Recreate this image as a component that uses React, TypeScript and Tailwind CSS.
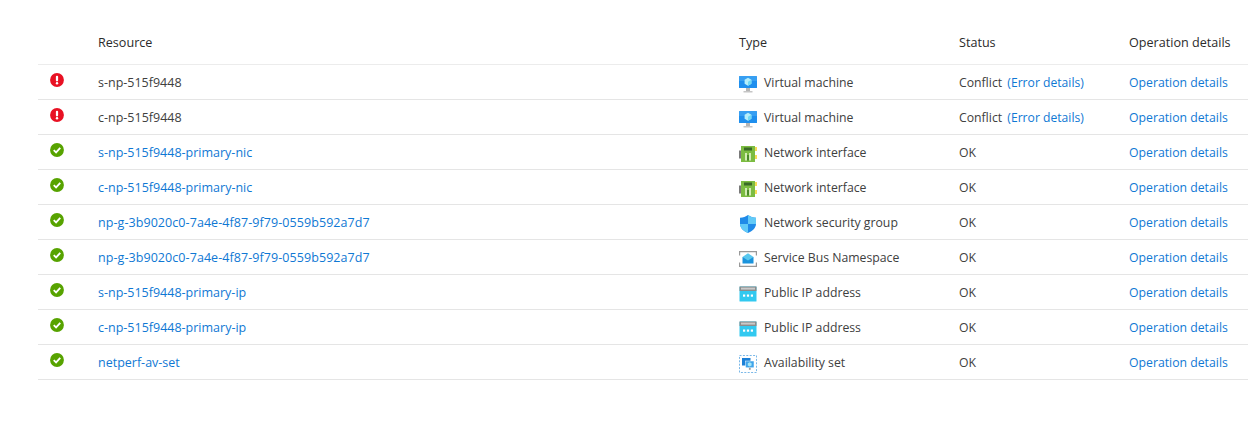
import React from 'react';

type RowData = {
  name: string;
  failed?: boolean;
  long?: boolean;
  type: string;
  icon: React.ReactNode;
};

const ErrorIcon = () => (
  <svg width="14" height="14" viewBox="0 0 15 15" className="block">
    <circle cx="7.5" cy="7.5" r="7.4" fill="#e81123" />
    <rect x="6.3" y="3" width="2.4" height="6" rx="1.1" fill="#fff" />
    <circle cx="7.5" cy="11" r="1.3" fill="#fff" />
  </svg>
);

const OkIcon = () => (
  <svg width="14" height="14" viewBox="0 0 15 15" className="block">
    <circle cx="7.5" cy="7.5" r="7.4" fill="#57a300" />
    <path d="M4 7.7 L6.5 10 L11 5.3" fill="none" stroke="#fff" strokeWidth="2" />
  </svg>
);

const VmIcon = () => (
  <svg width="18" height="18" viewBox="0 0 18 18" className="block">
    <rect x="0" y="1" width="18" height="12" rx="0.6" fill="#1f8fee" />
    <rect x="0" y="1" width="18" height="5" rx="0.6" fill="#4fb0f5" opacity="0.5" />
    <path d="M9 2.8 L12.4 4.8 V8.8 L9 10.8 L5.6 8.8 V4.8 Z" fill="#b5eefa" />
    <path d="M9 6.8 L12.4 4.8 V8.8 L9 10.8 Z" fill="#6fd8f4" />
    <rect x="7" y="13" width="4" height="3" fill="#b5b5b5" />
    <rect x="4.5" y="16" width="9" height="1.5" fill="#c6c6c6" />
  </svg>
);

const NicIcon = () => (
  <svg width="18" height="18" viewBox="0 0 18 18" className="block">
    <rect x="0" y="5.5" width="2" height="8" fill="#7a7a7a" />
    <rect x="2" y="1" width="14" height="16" fill="#7cbc42" />
    <rect x="5" y="2.5" width="8" height="3" fill="#3a6a26" />
    <rect x="6" y="8" width="2" height="7.5" fill="#d2ecb4" />
    <rect x="10" y="8" width="2" height="7.5" fill="#d2ecb4" />
    <rect x="8" y="10" width="2" height="5.5" fill="#4a8a2a" />
    <rect x="16" y="2" width="2" height="4" fill="#f5dc55" />
    <rect x="16" y="10" width="2" height="4" fill="#f5dc55" />
  </svg>
);

const ShieldIcon = () => (
  <svg width="18" height="18" viewBox="0 0 18 18" className="block">
    <path d="M9 0 C11 1.6 14 2.6 17 2.8 V9 C17 13 13 16.4 9 18 C5 16.4 1 13 1 9 V2.8 C4 2.6 7 1.6 9 0 Z" fill="#1f8ae8" />
    <path d="M9 0 C11 1.6 14 2.6 17 2.8 V9 H9 Z" fill="#62caf7" />
    <path d="M9 9 H1 C1 13 5 16.4 9 18 Z" fill="#62caf7" />
  </svg>
);

const BusIcon = () => (
  <svg width="18" height="18" viewBox="0 0 18 18" className="block">
    <path d="M0.6 5.5 V1.6 H17.4 V5.5" fill="none" stroke="#999" strokeWidth="1.2" />
    <path d="M0.6 12.5 V16.4 H17.4 V12.5" fill="none" stroke="#999" strokeWidth="1.2" />
    <rect x="3.5" y="7" width="11" height="6.5" fill="#1b93dc" />
    <path d="M3.5 7 L9 3.2 L14.5 7 L9 10.5 Z" fill="#59c8ee" />
  </svg>
);

const IpIcon = () => (
  <svg width="18" height="18" viewBox="0 0 18 18" className="block">
    <rect x="0.5" y="1.5" width="17" height="15" rx="0.6" fill="#32c9f0" />
    <rect x="0.5" y="1.5" width="17" height="4.5" fill="#8c8c8c" />
    <rect x="2" y="2.6" width="14" height="2" fill="#c9c9c9" />
    <rect x="4" y="9.5" width="2.2" height="2.2" fill="#fff" />
    <rect x="7.9" y="9.5" width="2.2" height="2.2" fill="#fff" />
    <rect x="11.8" y="9.5" width="2.2" height="2.2" fill="#fff" />
  </svg>
);

const AvSetIcon = () => (
  <svg width="18" height="18" viewBox="0 0 18 18" className="block">
    <rect x="0.5" y="0.5" width="17" height="17" fill="none" stroke="#7ab8e8" strokeWidth="1" strokeDasharray="2 1.4" />
    <rect x="3" y="3" width="8.5" height="7.5" fill="#1b7fd6" />
    <rect x="6.5" y="6" width="8.5" height="6.8" fill="#3fa4ea" stroke="#fff" strokeWidth="0.5" />
    <path d="M10.7 7.2 L12.6 8.3 V10.5 L10.7 11.6 L8.8 10.5 V8.3 Z" fill="#a5e6f7" />
    <rect x="9.9" y="12.8" width="1.8" height="2" fill="#9a9a9a" />
  </svg>
);

const rows: RowData[] = [
  { name: 's-np-515f9448', failed: true, type: 'Virtual machine', icon: <VmIcon /> },
  { name: 'c-np-515f9448', failed: true, type: 'Virtual machine', icon: <VmIcon /> },
  { name: 's-np-515f9448-primary-nic', type: 'Network interface', icon: <NicIcon /> },
  { name: 'c-np-515f9448-primary-nic', type: 'Network interface', icon: <NicIcon /> },
  { name: 'np-g-3b9020c0-7a4e-4f87-9f79-0559b592a7d7', long: true, type: 'Network security group', icon: <ShieldIcon /> },
  { name: 'np-g-3b9020c0-7a4e-4f87-9f79-0559b592a7d7', long: true, type: 'Service Bus Namespace', icon: <BusIcon /> },
  { name: 's-np-515f9448-primary-ip', type: 'Public IP address', icon: <IpIcon /> },
  { name: 'c-np-515f9448-primary-ip', type: 'Public IP address', icon: <IpIcon /> },
  { name: 'netperf-av-set', type: 'Availability set', icon: <AvSetIcon /> },
];

const cols = 'grid grid-cols-[60px_641px_220px_170px_1fr] items-center';

export default function App() {
  return (
    <div className="h-[437px] w-[1248px] overflow-hidden bg-white pt-[25px] pl-[38px] font-['Open_Sans',sans-serif] text-[12.25px] text-[#404040]">
      {/* Header */}
      <div className={`${cols} h-[40px] border-b border-[#ececec] pb-[3px] text-[12.6px] text-[#2b2b2b]`}>
        <div />
        <div>Resource</div>
        <div>Type</div>
        <div>Status</div>
        <div className="whitespace-nowrap">Operation details</div>
      </div>

      {rows.map((row, i) => (
        <div key={i} className={`${cols} h-[35px] border-b border-[#e5e5e5] pt-[2px]`}>
          <div className="pl-[12px] pb-[6px]">{row.failed ? <ErrorIcon /> : <OkIcon />}</div>
          <div className={`text-[12.5px] ${row.failed ? '' : 'text-[#0f78d4]'} ${row.long ? 'tracking-[0.07px]' : ''}`}>
            {row.name}
          </div>
          <div className="flex items-center gap-[7px]">
            <span className="mt-[2px]">{row.icon}</span>
            <span>{row.type}</span>
          </div>
          <div>
            {row.failed ? (
              <>
                Conflict <span className="ml-[2px] text-[12.15px] text-[#0f78d4]">(Error details)</span>
              </>
            ) : (
              'OK'
            )}
          </div>
          <div className="whitespace-nowrap text-[#0f78d4]">Operation details</div>
        </div>
      ))}
    </div>
  );
}
